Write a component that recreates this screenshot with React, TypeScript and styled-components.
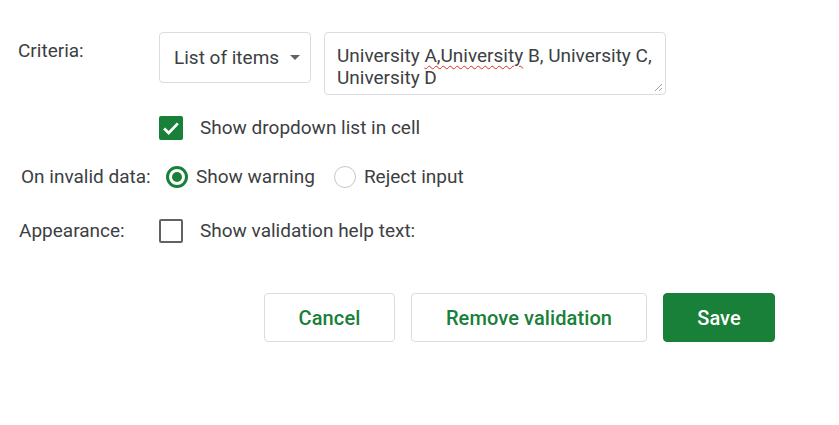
import styled, { createGlobalStyle } from "styled-components";

const GlobalStyle = createGlobalStyle`
    body {
        margin: 0;
        background: #ffffff;
        font-family: Roboto, "Liberation Sans", Arial, sans-serif;
        color: #3c4043;
    }
`;

const DialogContainer = styled.div`
    display: flex;
    flex-direction: column;
    width: 839px;
    height: 425px;
    padding-top: 32px;
    box-sizing: border-box;
`;

const Row = styled.div<{ $top?: number; $align?: string }>`
    display: flex;
    align-items: ${(p) => p.$align || "center"};
    margin-top: ${(p) => p.$top || 0}px;
`;

const Label = styled.div<{ $left: number; $top?: number }>`
    width: 159px;
    box-sizing: border-box;
    padding-left: ${(p) => p.$left}px;
    padding-top: ${(p) => p.$top || 0}px;
    font-size: 19px;
    line-height: 22px;
    color: #3c4043;
    white-space: nowrap;
    flex-shrink: 0;
`;

const Select = styled.div`
    display: flex;
    align-items: center;
    gap: 11px;
    width: 152px;
    height: 51px;
    box-sizing: border-box;
    padding: 0 14px;
    border: 1px solid #dadce0;
    border-radius: 4px;
    font-size: 19px;
    color: #3c4043;
    white-space: nowrap;
`;

const Arrow = styled.span`
    width: 0;
    height: 0;
    border-left: 5px solid transparent;
    border-right: 5px solid transparent;
    border-top: 5px solid #5f6368;
`;

const TextArea = styled.div`
    position: relative;
    margin-left: 13px;
    width: 342px;
    height: 63px;
    box-sizing: border-box;
    padding: 12px 12px 0;
    border: 1px solid #dadce0;
    border-radius: 4px;
    font-size: 19px;
    line-height: 22px;
    color: #3c4043;
    white-space: nowrap;
`;

const Misspelled = styled.span`
    text-decoration: underline wavy #d93025;
    text-decoration-thickness: 1px;
    text-underline-offset: 3px;
`;

const Grip = styled.svg`
    position: absolute;
    right: 2px;
    bottom: 2px;
`;

const Checkbox = styled.div<{ $checked?: boolean }>`
    display: flex;
    align-items: center;
    justify-content: center;
    width: 24px;
    height: 24px;
    box-sizing: border-box;
    border-radius: 2px;
    background: ${(p) => (p.$checked ? "#188038" : "#ffffff")};
    border: ${(p) => (p.$checked ? "none" : "2.5px solid #5f6368")};
    flex-shrink: 0;
`;

const OptionText = styled.span<{ $gap: number }>`
    margin-left: ${(p) => p.$gap}px;
    font-size: 19px;
    line-height: 22px;
    color: #3c4043;
    white-space: nowrap;
`;

const Radio = styled.div<{ $checked?: boolean; $left: number }>`
    display: flex;
    align-items: center;
    justify-content: center;
    margin-left: ${(p) => p.$left}px;
    width: 22px;
    height: 22px;
    box-sizing: border-box;
    border-radius: 50%;
    border: ${(p) => (p.$checked ? "3px solid #188038" : "1px solid #c4c7c5")};
    flex-shrink: 0;

    &::after {
        content: "";
        display: ${(p) => (p.$checked ? "block" : "none")};
        width: 10px;
        height: 10px;
        border-radius: 50%;
        background: #188038;
    }
`;

const ButtonBar = styled.div`
    display: flex;
    justify-content: flex-end;
    gap: 16px;
    margin-top: 50px;
    padding-right: 64px;
`;

const Button = styled.button<{ $primary?: boolean; $width: number }>`
    width: ${(p) => p.$width}px;
    height: 49px;
    padding: 0;
    border-radius: 4px;
    border: 1px solid ${(p) => (p.$primary ? "#188038" : "#dadce0")};
    background: ${(p) => (p.$primary ? "#188038" : "#ffffff")};
    color: ${(p) => (p.$primary ? "#ffffff" : "#188038")};
    font-family: Roboto, "Liberation Sans", Arial, sans-serif;
    font-size: 20px;
    font-weight: 500;
    letter-spacing: 0.1px;
    cursor: pointer;
`;

export default function App() {
    return (
        <>
            <GlobalStyle />
            <DialogContainer>
                <Row $align="flex-start">
                    <Label $left={18} $top={8}>Criteria:</Label>
                    <Select>
                        List of items
                        <Arrow />
                    </Select>
                    <TextArea>
                        University <Misspelled>A,University</Misspelled> B, University C,
                        <br />
                        University D
                        <Grip width="10" height="10" viewBox="0 0 10 10">
                            <path d="M9 2 L2 9 M9 6 L6 9" stroke="#9aa0a6" strokeWidth="1" />
                        </Grip>
                    </TextArea>
                </Row>
                <Row $top={21}>
                    <Label $left={0} />
                    <Checkbox $checked>
                        <svg width="22" height="22" viewBox="0 0 24 24">
                            <path d="M4.5 12.5 L9.5 17.5 L19.5 7" stroke="#ffffff" strokeWidth="3" fill="none" />
                        </svg>
                    </Checkbox>
                    <OptionText $gap={17}>Show dropdown list in cell</OptionText>
                </Row>
                <Row $top={26}>
                    <Label $left={21}>On invalid data:</Label>
                    <Radio $checked $left={7} />
                    <OptionText $gap={8}>Show warning</OptionText>
                    <Radio $left={19} />
                    <OptionText $gap={8}>Reject input</OptionText>
                </Row>
                <Row $top={31}>
                    <Label $left={19}>Appearance:</Label>
                    <Checkbox />
                    <OptionText $gap={17}>Show validation help text:</OptionText>
                </Row>
                <ButtonBar>
                    <Button $width={131}>Cancel</Button>
                    <Button $width={236}>Remove validation</Button>
                    <Button $primary $width={112}>Save</Button>
                </ButtonBar>
            </DialogContainer>
        </>
    );
}
